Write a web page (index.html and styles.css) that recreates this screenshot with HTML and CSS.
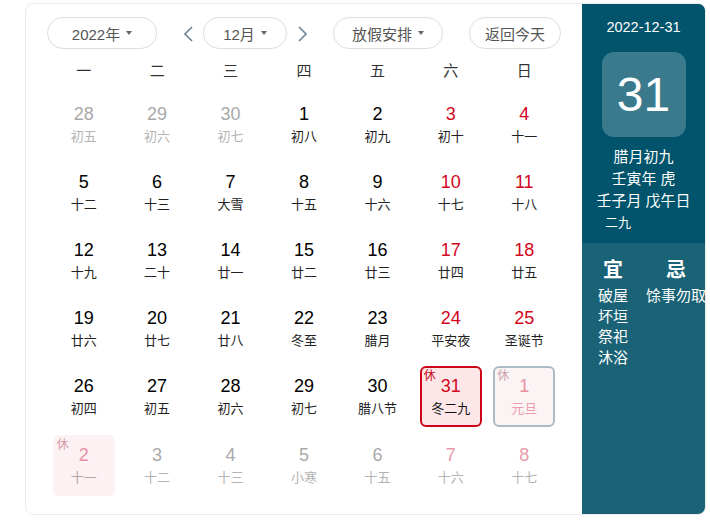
FILE: index.html
```html
<!DOCTYPE html>
<html lang="zh-CN">
<head>
<meta charset="utf-8">
<title>日历</title>
<link rel="stylesheet" href="styles.css">
</head>
<body>
<div class="cal">
  <div class="main">
    <div class="toolbar">
      <div class="btn btn-year">2022年<span class="caret"></span></div>
      <span class="arrow arrow-left"><svg width="9" height="16" viewBox="0 0 9 16"><polyline points="8,1 1,8 8,15" fill="none" stroke="#718494" stroke-width="1.6"/></svg></span>
      <div class="btn btn-month">12月<span class="caret"></span></div>
      <span class="arrow arrow-right"><svg width="9" height="16" viewBox="0 0 9 16"><polyline points="1,1 8,8 1,15" fill="none" stroke="#718494" stroke-width="1.6"/></svg></span>
      <div class="btn btn-holiday">放假安排<span class="caret"></span></div>
      <div class="btn btn-today">返回今天</div>
    </div>
    <div class="weekdays">
      <span>一</span><span>二</span><span>三</span><span>四</span><span>五</span><span>六</span><span>日</span>
    </div>
    <div class="grid">
      <div class="day other"><span class="num">28</span><span class="lun">初五</span></div>
      <div class="day other"><span class="num">29</span><span class="lun">初六</span></div>
      <div class="day other"><span class="num">30</span><span class="lun">初七</span></div>
      <div class="day"><span class="num">1</span><span class="lun">初八</span></div>
      <div class="day"><span class="num">2</span><span class="lun">初九</span></div>
      <div class="day wk"><span class="num">3</span><span class="lun">初十</span></div>
      <div class="day wk"><span class="num">4</span><span class="lun">十一</span></div>

      <div class="day"><span class="num">5</span><span class="lun">十二</span></div>
      <div class="day"><span class="num">6</span><span class="lun">十三</span></div>
      <div class="day"><span class="num">7</span><span class="lun">大雪</span></div>
      <div class="day"><span class="num">8</span><span class="lun">十五</span></div>
      <div class="day"><span class="num">9</span><span class="lun">十六</span></div>
      <div class="day wk"><span class="num">10</span><span class="lun">十七</span></div>
      <div class="day wk"><span class="num">11</span><span class="lun">十八</span></div>

      <div class="day"><span class="num">12</span><span class="lun">十九</span></div>
      <div class="day"><span class="num">13</span><span class="lun">二十</span></div>
      <div class="day"><span class="num">14</span><span class="lun">廿一</span></div>
      <div class="day"><span class="num">15</span><span class="lun">廿二</span></div>
      <div class="day"><span class="num">16</span><span class="lun">廿三</span></div>
      <div class="day wk"><span class="num">17</span><span class="lun">廿四</span></div>
      <div class="day wk"><span class="num">18</span><span class="lun">廿五</span></div>

      <div class="day"><span class="num">19</span><span class="lun">廿六</span></div>
      <div class="day"><span class="num">20</span><span class="lun">廿七</span></div>
      <div class="day"><span class="num">21</span><span class="lun">廿八</span></div>
      <div class="day"><span class="num">22</span><span class="lun">冬至</span></div>
      <div class="day"><span class="num">23</span><span class="lun">腊月</span></div>
      <div class="day wk"><span class="num">24</span><span class="lun">平安夜</span></div>
      <div class="day wk"><span class="num">25</span><span class="lun">圣诞节</span></div>

      <div class="day"><span class="num">26</span><span class="lun">初四</span></div>
      <div class="day"><span class="num">27</span><span class="lun">初五</span></div>
      <div class="day"><span class="num">28</span><span class="lun">初六</span></div>
      <div class="day"><span class="num">29</span><span class="lun">初七</span></div>
      <div class="day"><span class="num">30</span><span class="lun">腊八节</span></div>
      <div class="day wk sel"><span class="rest">休</span><span class="num">31</span><span class="lun">冬二九</span></div>
      <div class="day other hol hol-border"><span class="rest">休</span><span class="num">1</span><span class="lun">元旦</span></div>

      <div class="day other hol hol-plain"><span class="rest">休</span><span class="num">2</span><span class="lun">十一</span></div>
      <div class="day other"><span class="num">3</span><span class="lun">十二</span></div>
      <div class="day other"><span class="num">4</span><span class="lun">十三</span></div>
      <div class="day other"><span class="num">5</span><span class="lun">小寒</span></div>
      <div class="day other"><span class="num">6</span><span class="lun">十五</span></div>
      <div class="day other wk"><span class="num">7</span><span class="lun">十六</span></div>
      <div class="day other wk"><span class="num">8</span><span class="lun">十七</span></div>
    </div>
  </div>
  <div class="panel">
    <div class="panel-top">
      <div class="date">2022-12-31</div>
      <div class="bigday">31</div>
      <div class="lunar-info">
        <div>腊月初九</div>
        <div>壬寅年 虎</div>
        <div>壬子月 戊午日</div>
        <div class="extra">二九</div>
      </div>
    </div>
    <div class="yiji">
      <div class="col">
        <div class="col-title">宜</div>
        <div class="col-items">
          <div>破屋</div>
          <div>坏垣</div>
          <div>祭祀</div>
          <div>沐浴</div>
        </div>
      </div>
      <div class="col">
        <div class="col-title">忌</div>
        <div class="col-items">
          <div>馀事勿取</div>
        </div>
      </div>
    </div>
  </div>
</div>
</body>
</html>
```

FILE: styles.css
```css
* {
  box-sizing: border-box;
}

body {
  margin: 0;
  background: #fff;
  font-family: "Liberation Sans", "Noto Sans CJK SC", sans-serif;
}

.cal {
  display: flex;
  width: 681px;
  height: 512px;
  margin: 3px 0 0 25px;
  border: 1px solid #ebebeb;
  border-radius: 8px;
}

.main {
  width: 556px;
  flex-shrink: 0;
  padding: 13px 0 0 21px;
}

.toolbar {
  display: flex;
  align-items: center;
  height: 32px;
}

.btn {
  display: flex;
  align-items: center;
  justify-content: center;
  flex-shrink: 0;
  height: 32px;
  border: 1px solid #e2dcdc;
  border-radius: 16px;
  font-size: 15px;
  color: #555;
}

.btn-year { width: 110px; }
.btn-month { width: 84px; }
.btn-holiday { width: 110px; }
.btn-today { width: 92px; margin-left: 26px; }

.caret {
  display: inline-block;
  width: 0;
  height: 0;
  margin-left: 6px;
  border-left: 3.5px solid transparent;
  border-right: 3.5px solid transparent;
  border-top: 4px solid #666;
}

.arrow {
  display: flex;
  align-items: center;
  height: 32px;
  padding-top: 2px;
}

.arrow-left { margin: 0 10px 0 27px; }
.arrow-right { margin: 0 26px 0 11px; }

.weekdays {
  display: grid;
  grid-template-columns: repeat(7, 73.43px);
  height: 28px;
  margin-top: 6px;
  align-items: center;
  text-align: center;
  font-size: 15px;
  color: #333;
}

.grid {
  display: grid;
  grid-template-columns: repeat(7, 73.43px);
  grid-auto-rows: 68.2px;
  margin-top: 7px;
}

.day {
  position: relative;
  justify-self: center;
  align-self: center;
  width: 62px;
  height: 61px;
  padding-top: 7px;
  border: 2px solid transparent;
  border-radius: 6px;
  text-align: center;
  color: #000;
}

.num {
  display: block;
  font-size: 18px;
  line-height: 22px;
}

.lun {
  display: block;
  margin-top: 4px;
  font-size: 13px;
  line-height: 16px;
  color: #222;
}

.day.wk .num { color: #d2061c; }

.day.other .num { color: #a9a9a9; }
.day.other .lun { color: #b3b3b3; }
.day.other.wk .num { color: #e89aab; }

.rest {
  position: absolute;
  top: 1px;
  left: 2px;
  font-size: 12px;
  line-height: 14px;
}

.day.sel {
  background: #fce6e8;
  border-color: #cc0618;
}

.day.sel .rest { color: #cc0618; }
.day.sel .lun { color: #111; }

.day.hol .num { color: #e88fa3; }
.day.hol .rest { color: #d99aa8; }

.day.hol-border {
  background: #fcf3f4;
  border-color: #abbcc4;
}

.day.hol-border .lun { color: #e99cad; }
.day.hol-border .rest { color: #c9a3ad; }

.day.hol-plain {
  background: #fcf2f3;
}

.day.hol-plain .lun { color: #b8a5a9; }

.panel {
  display: flex;
  flex-direction: column;
  width: 123px;
  flex-shrink: 0;
  background: #1a6275;
  border-radius: 0 7px 7px 0;
  color: #fff;
}

.panel-top {
  height: 239px;
  padding-top: 15px;
  background: #01546b;
  border-top-right-radius: 7px;
  text-align: center;
}

.date {
  font-size: 14.5px;
  line-height: 16px;
}

.bigday {
  width: 84px;
  height: 85px;
  margin: 17px auto 0;
  border-radius: 12px;
  background: #3a7a8c;
  font-size: 48px;
  line-height: 85px;
}

.lunar-info {
  margin-top: 9px;
  font-size: 15px;
  line-height: 22px;
}

.lunar-info .extra {
  padding-left: 23px;
  font-size: 13px;
  text-align: left;
}

.yiji {
  display: flex;
  gap: 18px;
  padding: 14px 0 0 16px;
}

.col {
  display: flex;
  flex-direction: column;
  align-items: center;
  flex-shrink: 0;
}

.col-title {
  font-size: 20px;
  font-weight: bold;
  line-height: 26px;
}

.col-items {
  margin-top: 3px;
  font-size: 15px;
  line-height: 20.5px;
  white-space: nowrap;
}
```
